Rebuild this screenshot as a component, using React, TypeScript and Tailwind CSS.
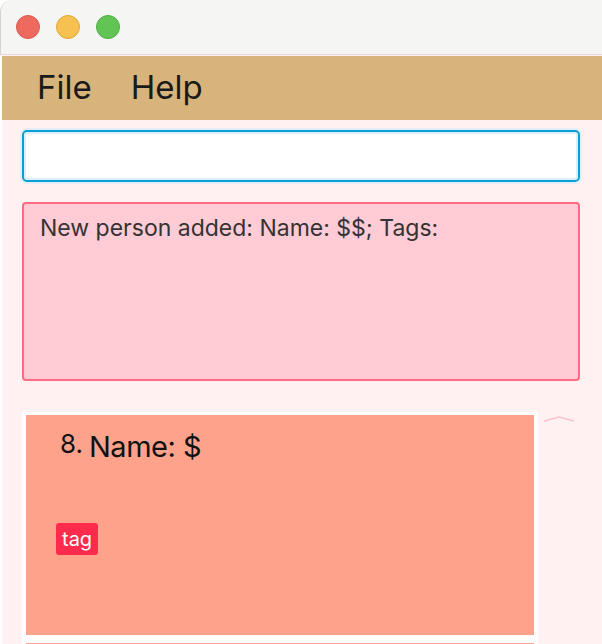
import React from "react";

const font = { fontFamily: "Inter, 'Noto Sans', sans-serif" };

function TitleBar() {
  return (
    <div className="h-[54px] bg-[#f5f5f4] rounded-tl-[12px] border-l border-[#d4d4d4] flex items-center gap-[16px] pl-[15px]">
      <span className="w-[24px] h-[24px] rounded-full bg-[#ee6a5f] border border-[#d85a50]" />
      <span className="w-[24px] h-[24px] rounded-full bg-[#f6c150] border border-[#dea73c]" />
      <span className="w-[24px] h-[24px] rounded-full bg-[#61c454] border border-[#50ad44]" />
    </div>
  );
}

function MenuBar() {
  return (
    <div className="ml-[2px] h-[64px] bg-[#d6b47b] flex items-center gap-[39px] pl-[35px] text-[33px] text-[#1a1a1a]">
      <span>File</span>
      <span>Help</span>
    </div>
  );
}

function PersonCard() {
  return (
    <div className="h-[220px] bg-[#ffa28c] pl-[34px] pt-[13px]">
      <div className="flex items-start text-[#111]">
        <span className="text-[26px] leading-[32px] w-[29px]">8.</span>
        <span className="text-[29px] leading-[35px] mt-[1px] tracking-[-0.5px]">Name: $</span>
      </div>
      <div className="mt-[59px] -ml-[4px] flex">
        <span className="h-[32px] px-[6px] rounded-[3px] bg-[#ff2b4d] text-white text-[20px] leading-[32px]">
          tag
        </span>
      </div>
    </div>
  );
}

export default function App() {
  return (
    <div className="w-[602px] h-[644px] overflow-hidden bg-white" style={font}>
      <TitleBar />
      <div className="h-[1px] bg-[#e8d6da]" />
      <div className="h-[1px] bg-[#fff0f2]" />
      <MenuBar />
      <div className="bg-[#fff0f2] h-[525px] px-[22px] pt-[10px] ml-[2px]">
        <div className="h-[52px] -ml-[2px] rounded-[5px] border-2 border-[#0a9fd6] bg-white shadow-[0_0_0_2px_#e4eef6,inset_0_0_0_2px_#dcf0fa]" />
        <div className="mt-[20px] -ml-[2px] h-[179px] rounded-[4px] border-2 border-[#ff6b80] bg-[#ffcbd4] pl-[16px] pt-[9px] text-[23px] leading-[30px] text-[#333]">
          New person added: Name: $$; Tags:
        </div>
        <div className="mt-[31px] -ml-[2px] flex">
          <div className="w-[516px] bg-white pt-[3px] px-[4px] flex flex-col gap-[8px]">
            <PersonCard />
            <div className="h-[20px] bg-[#ffa28c]" />
          </div>
          <div className="flex-1 flex justify-center pt-[4px]">
            <svg width="32" height="6" viewBox="0 0 32 6">
              <path d="M1 5 L16 1 L31 5" fill="none" stroke="#ffc2cc" strokeWidth="1.5" />
            </svg>
          </div>
        </div>
      </div>
    </div>
  );
}
